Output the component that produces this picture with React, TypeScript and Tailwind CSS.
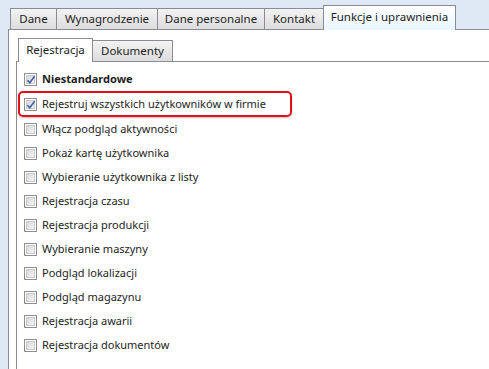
const outerTabs = [
  { label: 'Dane', w: 'w-[47px]' },
  { label: 'Wynagrodzenie', w: 'w-[102px]' },
  { label: 'Dane personalne', w: 'w-[108px]' },
  { label: 'Kontakt', w: 'w-[60px]' },
];

const items = [
  { label: 'Niestandardowe', checked: true, bold: true },
  { label: 'Rejestruj wszystkich użytkowników w firmie', checked: true, highlight: true },
  { label: 'Włącz podgląd aktywności' },
  { label: 'Pokaż kartę użytkownika' },
  { label: 'Wybieranie użytkownika z listy' },
  { label: 'Rejestracja czasu' },
  { label: 'Rejestracja produkcji' },
  { label: 'Wybieranie maszyny' },
  { label: 'Podgląd lokalizacji' },
  { label: 'Podgląd magazynu' },
  { label: 'Rejestracja awarii' },
  { label: 'Rejestracja dokumentów' },
];

const CheckBox = ({ checked }: { checked?: boolean }) => (
  <span className="relative flex h-[13px] w-[13px] shrink-0 items-center justify-center border border-[#8f8f8f] bg-white">
    <span className="h-[9px] w-[9px] border border-[#c9c9c9] bg-gradient-to-br from-[#d6d6d6] to-[#f7f7f7]" />
    {checked && (
      <svg className="absolute left-[1px] top-[1px] h-[10px] w-[10px]" viewBox="0 0 10 10">
        <path d="M1.5 5.2 L3.8 7.8 L8.6 1.2" fill="none" stroke="#3c5ea8" strokeWidth={1.6} />
      </svg>
    )}
  </span>
);

export default function App() {
  return (
    <div
      className="flex h-[369px] w-[489px] flex-col overflow-hidden bg-[#dfe9f5] pl-2 pt-[5px] text-[12px] text-[#1e1e1e]"
      style={{ fontFamily: '"Noto Sans", "Open Sans", sans-serif' }}
    >
      <div className="flex items-end pl-[2px]">
        {outerTabs.map((t, i) => (
          <div
            key={t.label}
            className={`${t.w} ${i > 0 ? '-ml-px' : ''} flex h-[21px] items-center justify-center border border-b-0 border-[#898c95] bg-gradient-to-b from-[#f3f3f3] to-[#dcdcdc] text-[11.5px] leading-none`}
          >
            {t.label}
          </div>
        ))}
        <div className="relative z-10 -mb-px -ml-px flex h-[25px] w-[133px] items-center justify-center border border-b-0 border-[#898c95] bg-gradient-to-b from-white to-[#e9f6fd] pb-[2px] text-[11.5px] leading-none">
          Funkcje i uprawnienia
        </div>
      </div>

      <div className="flex flex-1 flex-col border-l border-t border-[#898c95] bg-white pl-[7px] pt-[8px]">
        <div className="flex items-end pl-[2px]">
          <div className="relative z-10 -mb-px flex h-[24px] w-[75px] items-center justify-center border border-b-0 border-[#898c95] bg-white pb-[2px] text-[11.5px] leading-none">
            Rejestracja
          </div>
          <div className="-ml-px flex h-[21px] w-[81px] items-center justify-center border border-b-0 border-[#898c95] bg-gradient-to-b from-[#f3f3f3] to-[#dcdcdc] text-[11.5px] leading-none">
            Dokumenty
          </div>
        </div>

        <div className="flex flex-1 flex-col border-l border-t border-[#898c95] bg-white pt-[5px] text-[11px]">
          {items.map((it) => (
            <div
              key={it.label}
              className={`flex items-center gap-[5px] ${
                it.highlight
                  ? 'ml-px h-[26px] w-[274px] rounded-[5px] border-2 border-[#e3101a] pl-[4px] shadow-[0_1px_2px_rgba(0,0,0,0.25)]'
                  : 'h-[24px] pl-[7px]'
              }`}
            >
              <CheckBox checked={it.checked} />
              <span className={it.bold ? 'font-bold' : ''}>{it.label}</span>
            </div>
          ))}
        </div>
      </div>
    </div>
  );
}
